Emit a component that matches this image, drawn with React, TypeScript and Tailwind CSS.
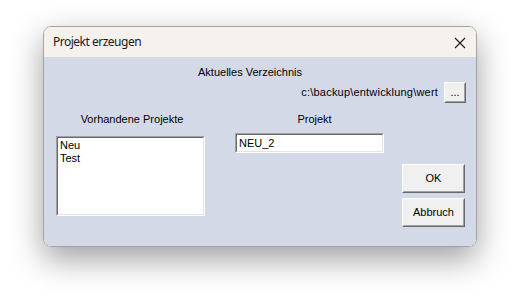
import React from "react";

const winFont = { fontFamily: '"Liberation Sans", Arial, sans-serif' };

// classic sunken border (list box / edit field)
function Sunken({ className, children }: { className: string; children?: React.ReactNode }) {
  return (
    <div className={`border border-t-[#a0a0a0] border-l-[#a0a0a0] border-b-white border-r-white ${className}`}>
      <div className="h-full w-full border border-t-[#696969] border-l-[#696969] border-b-[#e3e3e3] border-r-[#e3e3e3] bg-white">
        {children}
      </div>
    </div>
  );
}

function Button({ label, className }: { label: string; className: string }) {
  return (
    <div className={`border border-t-white border-l-white border-b-[#696969] border-r-[#696969] ${className}`}>
      <div className="flex h-full w-full items-center justify-center border border-t-[#f0f0f0] border-l-[#f0f0f0] border-b-[#a0a0a0] border-r-[#a0a0a0] bg-[#f0f0f0] text-[11px] text-black">
        {label}
      </div>
    </div>
  );
}

export default function App() {
  return (
    <div className="h-[299px] w-[518px] overflow-hidden bg-white pl-[43px] pt-[26px]">
      {/* dialog window */}
      <div className="w-[434px] overflow-hidden rounded-[8px] border border-[#a3a3a3] shadow-[0_12px_32px_rgba(0,0,0,0.38)]">
        {/* title bar */}
        <div className="flex h-[30px] items-center justify-between bg-[#f7f1ed] pl-[9px] pr-[9px]">
          <span className="text-[12px] tracking-[-0.5px] text-[#1a1a1a]" style={{ fontFamily: '"Noto Sans", sans-serif' }}>
            Projekt erzeugen
          </span>
          <svg width="12" height="12" viewBox="0 0 12 12" className="mr-[1px] mt-[1px]">
            <path d="M1 1 L11 11 M11 1 L1 11" stroke="#1a1a1a" strokeWidth="1.1" fill="none" />
          </svg>
        </div>

        {/* body */}
        <div className="h-[189px] bg-[#d4d9e8] text-[11px] leading-[13px] text-black" style={winFont}>
          <div className="pl-[154px] pt-[9px]">Aktuelles Verzeichnis</div>

          <div className="mt-[3px] flex items-center justify-end gap-[6px] pr-[10px]">
            <span className="tracking-[0.2px]">c:\backup\entwicklung\wert</span>
            <Button label="..." className="h-[21px] w-[22px]" />
          </div>

          <div className="flex">
            <div className="ml-[12px] flex w-[149px] flex-col">
              <div className="mt-[10px] pl-[3px] text-center">Vorhandene Projekte</div>
              <Sunken className="mt-[10px] h-[80px] w-[149px]">
                <div className="pl-[2px] pt-[1px] leading-[13px]">
                  <div>Neu</div>
                  <div>Test</div>
                </div>
              </Sunken>
            </div>

            <div className="ml-[30px] flex w-[149px] flex-col">
              <div className="mt-[10px] pl-[10px] text-center">Projekt</div>
              <Sunken className="mt-[7px] h-[20px] w-[149px]">
                <div className="pl-[2px] pt-[2px]">NEU_2</div>
              </Sunken>
            </div>

            <div className="ml-[18px] flex flex-col gap-[5px] pt-[61px]">
              <Button label="OK" className="h-[29px] w-[63px]" />
              <Button label="Abbruch" className="h-[29px] w-[63px]" />
            </div>
          </div>
        </div>
      </div>
    </div>
  );
}
